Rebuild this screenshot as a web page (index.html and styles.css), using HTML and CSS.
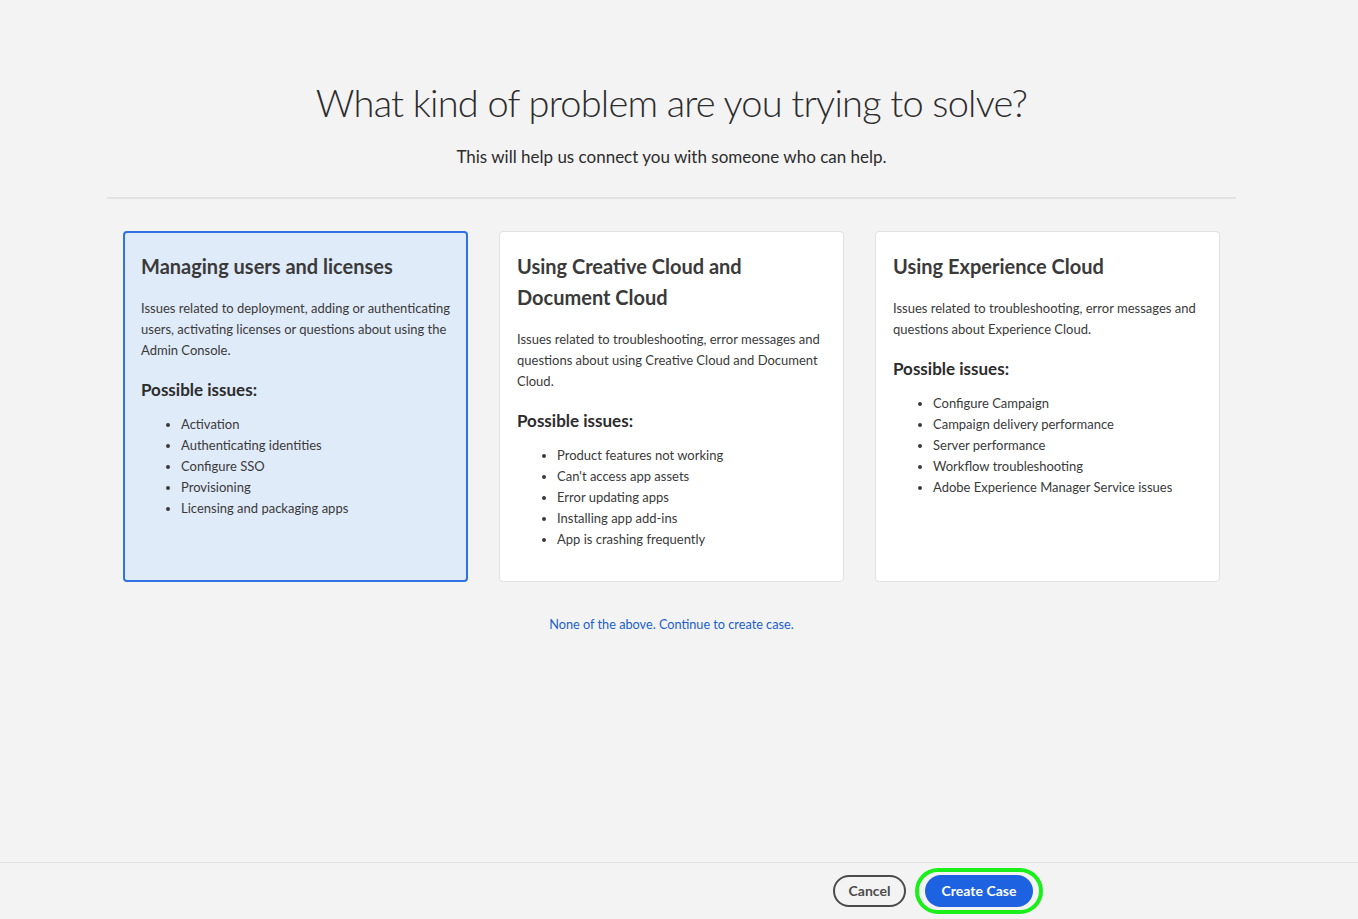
FILE: index.html
```html
<!DOCTYPE html>
<html lang="en">
<head>
<meta charset="utf-8">
<title>What kind of problem are you trying to solve?</title>
<link rel="stylesheet" href="styles.css">
</head>
<body>
<div class="page">
  <main class="content">
    <header class="intro">
      <h1 class="title">What kind of problem are you trying to solve?</h1>
      <p class="subtitle">This will help us connect you with someone who can help.</p>
    </header>
    <div class="divider"></div>
    <section class="cards">
      <article class="card card-selected">
        <h2 class="card-title">Managing users and licenses</h2>
        <p class="card-desc">Issues related to deployment, adding or authenticating users, activating licenses or questions about using the Admin Console.</p>
        <h3 class="card-sub">Possible issues:</h3>
        <ul class="issues">
          <li>Activation</li>
          <li>Authenticating identities</li>
          <li>Configure SSO</li>
          <li>Provisioning</li>
          <li>Licensing and packaging apps</li>
        </ul>
      </article>
      <article class="card">
        <h2 class="card-title">Using Creative Cloud and Document Cloud</h2>
        <p class="card-desc">Issues related to troubleshooting, error messages and questions about using Creative Cloud and Document Cloud.</p>
        <h3 class="card-sub">Possible issues:</h3>
        <ul class="issues">
          <li>Product features not working</li>
          <li>Can't access app assets</li>
          <li>Error updating apps</li>
          <li>Installing app add-ins</li>
          <li>App is crashing frequently</li>
        </ul>
      </article>
      <article class="card">
        <h2 class="card-title">Using Experience Cloud</h2>
        <p class="card-desc">Issues related to troubleshooting, error messages and questions about Experience Cloud.</p>
        <h3 class="card-sub">Possible issues:</h3>
        <ul class="issues">
          <li>Configure Campaign</li>
          <li>Campaign delivery performance</li>
          <li>Server performance</li>
          <li>Workflow troubleshooting</li>
          <li>Adobe Experience Manager Service issues</li>
        </ul>
      </article>
    </section>
    <div class="none-row"><a class="none-link" href="#">None of the above. Continue to create case.</a></div>
  </main>
  <footer class="footer">
    <button class="btn btn-secondary" type="button">Cancel</button>
    <span class="highlight"><button class="btn btn-primary" type="button">Create Case</button></span>
  </footer>
</div>
</body>
</html>
```

FILE: styles.css
```css
* { box-sizing: border-box; }
html, body { margin: 0; padding: 0; }
body {
  background: #f3f3f3;
  font-family: "Lato", "Open Sans", "Liberation Sans", sans-serif;
  color: #2c2c2c;
  width: 1358px;
  height: 919px;
  overflow: hidden;
}
.page {
  height: 919px;
  display: flex;
  flex-direction: column;
}
.content {
  flex: 1;
  width: 1343px;
  display: flex;
  flex-direction: column;
  align-items: center;
  padding-top: 78px;
}
.intro { text-align: center; }
.title {
  margin: 0;
  font-weight: 300;
  font-size: 38px;
  line-height: 48px;
  color: #2c2c2c;
  letter-spacing: -0.8px;
}
.subtitle {
  margin: 20px 0 0;
  font-size: 17px;
  line-height: 22px;
  color: #2c2c2c;
}
.divider {
  width: 1129px;
  height: 2px;
  background: #e3e3e3;
  margin-top: 29px;
}
.cards {
  display: flex;
  gap: 31px;
  margin-top: 32px;
}
.card {
  width: 345px;
  height: 351px;
  background: #ffffff;
  border: 1px solid #e1e1e1;
  border-radius: 4px;
  padding: 19px 15px 0 17px;
  color: #3a3a3a;
}
.card-selected {
  background: #e0ebf9;
  border: 2px solid #2f72e0;
  padding: 18px 14px 0 16px;
}
.card-title {
  margin: 0;
  font-size: 20px;
  line-height: 31px;
  font-weight: 700;
  color: #3a3a3a;
}
.card-desc {
  margin: 16px 0 0;
  font-size: 13px;
  line-height: 21px;
  color: #3a3a3a;
}
.card-sub {
  margin: 16px 0 0;
  font-size: 17px;
  line-height: 25px;
  font-weight: 700;
  color: #2c2c2c;
}
.issues {
  margin: 12px 0 0;
  padding-left: 40px;
  font-size: 13px;
  line-height: 21px;
  color: #3a3a3a;
}
.none-row {
  margin-top: 31px;
  text-align: center;
}
.none-link {
  color: #1b5fce;
  font-size: 12.7px;
  text-decoration: none;
}
.footer {
  height: 57px;
  border-top: 1px solid #e3e3e3;
  display: flex;
  align-items: center;
  justify-content: flex-end;
  padding-right: 315px;
  padding-bottom: 1px;
  gap: 9px;
}
.btn {
  font-family: inherit;
  font-size: 14px;
  font-weight: 700;
  height: 32px;
  border-radius: 16px;
  padding: 0 12px;
  cursor: pointer;
}
.btn-secondary {
  background: transparent;
  border: 2px solid #4b4b4b;
  color: #4b4b4b;
  width: 73px;
}
.btn-primary {
  background: #1d62e0;
  border: none;
  color: #ffffff;
  width: 108px;
}
.highlight {
  display: inline-flex;
  padding: 3px 6px;
  border: 4px solid #19f019;
  border-radius: 24px;
}
```
